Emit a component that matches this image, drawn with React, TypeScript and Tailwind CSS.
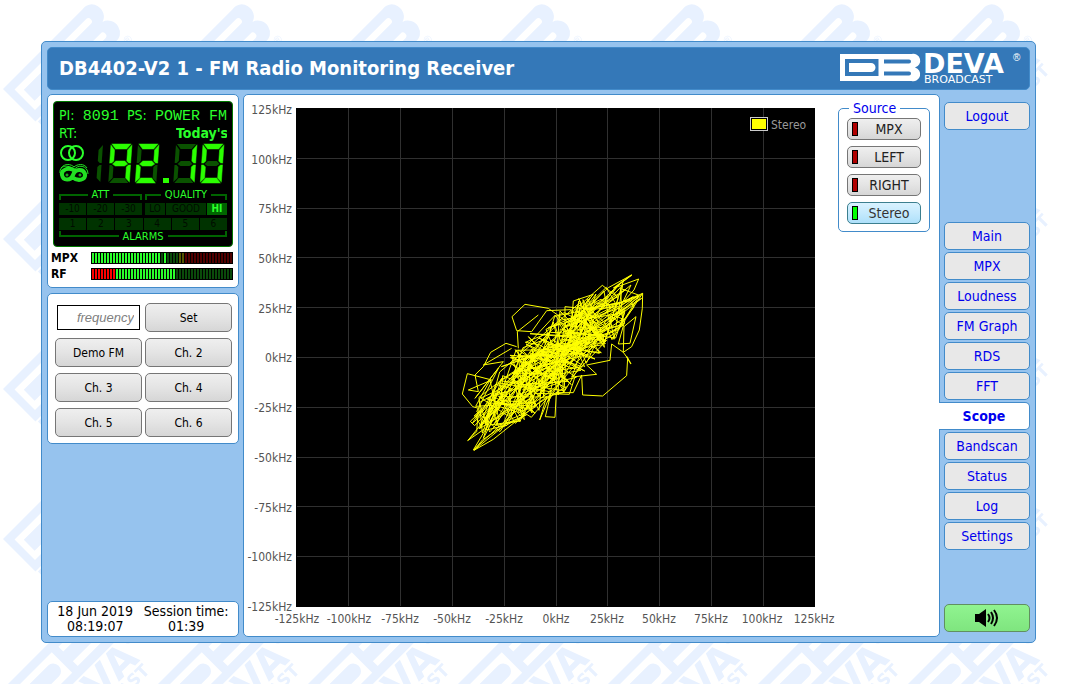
import type { ReactNode } from "react";

const NAV = ["Main", "MPX", "Loudness", "FM Graph", "RDS", "FFT", "Scope", "Bandscan", "Status", "Log", "Settings"];
const PRESETS = ["Demo FM", "Ch. 2", "Ch. 3", "Ch. 4", "Ch. 5", "Ch. 6"];
const SOURCES = ["MPX", "LEFT", "RIGHT", "Stereo"];
const TICKS = [-125, -100, -75, -50, -25, 0, 25, 50, 75, 100, 125];

function LogoMark() {
    return (
        <path
            fillRule="evenodd"
            d="M0 0H71.500A6.500 6.500 0 0 1 75 13.500A6.500 6.500 0 0 1 71.500 27H0ZM5 5V22H38.500V5ZM44 5.500V9.500H69A2 2 0 0 0 69 5.500ZM44 17.500V21.500H69A2 2 0 0 0 69 17.500ZM9 9H31A4.500 4.500 0 0 1 31 18H9Z"
        />
    );
}

// tiled page background
function Watermark() {
    return (
        <svg className="absolute inset-0 -z-10 h-full w-full" aria-hidden="true">
            <defs>
                <pattern id="deva" width="150" height="150" patternUnits="userSpaceOnUse">
                    <g transform="translate(3 89) rotate(-45)" fill="#e8f1ff">
                        <g transform="scale(1.57 1.7)">
                            <LogoMark />
                        </g>
                        <text x="-2" y="77" fontSize="40" fontWeight="bold" fontFamily="DejaVu Sans">DEVA</text>
                        <text x="0" y="92" fontSize="17" fontWeight="bold" fontFamily="DejaVu Sans">BROADCAST</text>
                        <text x="119" y="57" fontSize="11" fontFamily="Liberation Sans">®</text>
                    </g>
                </pattern>
            </defs>
            <rect width="1050" height="100%" fill="url(#deva)" />
        </svg>
    );
}

function Logo() {
    return (
        <svg width="184" height="40" viewBox="0 0 184 40" fill="#fff" role="img" aria-label="DEVA Broadcast">
            <g transform="translate(0 6)">
                <LogoMark />
            </g>
            <text x="83" y="25" fontSize="27" fontWeight="bold" fontFamily="DejaVu Sans">DEVA</text>
            <text x="84" y="35" fontSize="11" fontFamily="DejaVu Sans">BROADCAST</text>
            <text x="173" y="13" fontSize="10" fontFamily="Liberation Sans">®</text>
        </svg>
    );
}

function Panel({ className = "", children }: { className?: string; children: ReactNode }) {
    return <div className={`rounded-[5px] border border-[#428bca] bg-white ${className}`}>{children}</div>;
}

// segments in order: top, top right, bottom right, bottom, bottom left, top left, middle
const SEGMENTS = [
    "2,0 21,0 17,5 6,5",
    "22,1 22,19 20,19 18,17 18,6",
    "22,21 22,38 18,34 18,23 20,21",
    "2,39 21,39 17,34 6,34",
    "1,21 3,21 5,23 5,34 1,38",
    "1,1 5,6 5,17 3,19 1,19",
    "4,20 7,17 16,17 19,20 16,22 7,22",
];

function Digit({ x, on }: { x: number; on: string }) {
    return (
        <g transform={`translate(${x} 1) skewX(-4)`} strokeWidth="1" strokeLinejoin="round">
            {SEGMENTS.map((points, i) => (
                <polygon
                    key={i}
                    points={points}
                    fill={on[i] === "1" ? "#2bff00" : "#0a5200"}
                    stroke={on[i] === "1" ? "#2bff00" : "none"}
                    strokeOpacity="0.5"
                />
            ))}
        </g>
    );
}

function Frequency() {
    return (
        <svg width="170" height="42" viewBox="0 0 170 42" role="img" aria-label="92.10 MHz">
            <g fill="none" stroke="#2bff2b" strokeWidth="2">
                <circle cx="9" cy="10" r="7" />
                <circle cx="17" cy="10" r="7" />
            </g>
            <g fill="none" stroke="#22e022">
                <path strokeWidth="4" d="M16 28C10 23 2 27 3 32C4 38 12 38 14 32C16 26 24 25 26 31C27 37 19 39 13 34" />
                <path strokeWidth="1" d="M1 30C0 21 12 22 15 27C18 21 29 22 29 31M2 25C6 20 12 21 15 24C18 21 25 20 28 25" />
                <circle cx="8" cy="32" r="1" />
                <circle cx="21" cy="32" r="1" />
            </g>
            <g transform="translate(22 1) skewX(-4)" fill="#0a5200">
                <polygon points="22,1 22,19 20,19 18,17 18,6" />
                <polygon points="22,21 22,38 18,34 18,23 20,21" />
            </g>
            <Digit x={51} on="1110011" />
            <Digit x={78} on="1101101" />
            <rect x="104" y="35" width="6" height="5" fill="#2bff00" />
            <Digit x={116} on="0110000" />
            <Digit x={143} on="1111110" />
        </svg>
    );
}

function Bracket({ label, up }: { label: string; up?: boolean }) {
    const edge = up ? "mb-[5px] border-b-2" : "mt-[5px] border-t-2";
    return (
        <div className="flex h-3 flex-1 justify-center gap-1 text-[11px] leading-3 text-[#2bff2b]">
            <span className={`h-[6px] flex-1 border-l-2 border-[#006400] ${edge}`} />
            {label}
            <span className={`h-[6px] flex-1 border-r-2 border-[#006400] ${edge}`} />
        </div>
    );
}

function Cell({ className = "flex-1", children }: { className?: string; children: ReactNode }) {
    return <span className={`h-3 bg-[#003300] text-center text-[10px] leading-3 text-[#000c00] ${className}`}>{children}</span>;
}

function Lcd() {
    return (
        <div className="h-[146px] overflow-hidden rounded border border-[#007800] bg-black px-[5px] pt-[5px] text-[14px] text-[#2bff2b]">
            <div className="flex h-[17px] items-baseline justify-between whitespace-pre leading-4">
                <span>PI:</span>
                <span className="font-['Liberation_Mono'] text-[15px]">8091</span>
                <span>PS:</span>
                <span className="font-['Liberation_Mono'] text-[15px]">POWER FM</span>
            </div>
            <div className="flex h-[17px] items-center justify-between overflow-hidden leading-4">
                <span>RT:</span>
                <b className="w-[51px] overflow-hidden whitespace-nowrap">Today's</b>
            </div>
            <div className="pt-[2px]">
                <Frequency />
            </div>
            <div className="mt-1 flex gap-[3px]">
                <div className="flex w-[83px]"><Bracket label="ATT" /></div>
                <Bracket label="QUALITY" />
            </div>
            <div className="mt-[2px] flex gap-[3px]">
                <div className="flex w-[83px] gap-[1px]">
                    <Cell>-10</Cell>
                    <Cell>-20</Cell>
                    <Cell>-30</Cell>
                </div>
                <div className="flex flex-1 gap-[1px]">
                    <Cell className="w-5">LO</Cell>
                    <Cell>GOOD</Cell>
                    <span className="h-3 w-5 bg-[#006400] text-center text-[10px] font-bold leading-3">HI</span>
                </div>
            </div>
            <div className="mt-[3px] flex gap-[1px]">
                {[1, 2, 3, 4, 5, 6].map((n) => <Cell key={n}>{n}</Cell>)}
            </div>
            <div className="mt-[1px] flex"><Bracket label="ALARMS" up /></div>
        </div>
    );
}

function Meter({ label, bars }: { label: string; bars: [string, number][] }) {
    return (
        <div className="flex h-4 items-center justify-between">
            <b className="text-[12px] leading-4">{label}</b>
            <div className="flex h-3 gap-[1px] bg-black p-[1px]" role="img" aria-label={`${label} level`}>
                {bars.flatMap(([color, count], i) =>
                    Array.from({ length: count }, (_, j) => <i key={`${i}-${j}`} className={`w-[2px] ${color}`} />)
                )}
            </div>
        </div>
    );
}

const BUTTON = "rounded-[5px] border border-[#767676] bg-linear-to-b from-[#efefef] from-0% via-[#e4e4e4] via-50% to-[#d6d6d6]";

// stereo trace: a dense diagonal cloud
function tracePoints() {
    let seed = 4402;
    const rnd = () => {
        seed = (seed * 1103515245 + 12345) % 2147483648;
        return seed / 2147483648;
    };
    const pts: string[] = [];
    let base = 0;
    for (let i = 0; i < 380; i++) {
        if (i % 6 === 0) base = rnd() * 1.6 - 0.8;
        const t = Math.max(-0.95, Math.min(0.95, base + (rnd() - 0.5) * 0.6));
        const spread = (1 - t * t * 0.6) * (rnd() * 2 - 1);
        const x = 312 + t * 240 + spread * 72;
        const y = 278 - t * 225 + spread * 72;
        pts.push(`${Math.round(x)},${Math.round(y)}`);
    }
    return pts.join(" ");
}

function Scope() {
    return (
        <svg width="592" height="536" viewBox="244 98 592 536" className="shrink-0" role="img" aria-label="Scope">
            <rect x="296" y="108" width="519" height="499" />
            <g stroke="#303030">
                {TICKS.slice(1, -1).map((_, i) => (
                    <g key={i}>
                        <line x1={Math.round(296 + (i + 1) * 51.9) + 0.5} x2={Math.round(296 + (i + 1) * 51.9) + 0.5} y1="108" y2="606" />
                        <line y1={Math.round(108 + (i + 1) * 49.8) + 0.5} y2={Math.round(108 + (i + 1) * 49.8) + 0.5} x1="297" x2="815" />
                    </g>
                ))}
            </g>
            <g fill="#545454" fontSize="12">
                {TICKS.map((t, i) => (
                    <g key={t}>
                        <text x="292" y={611 - Math.round(i * 49.7)} textAnchor="end">{t}kHz</text>
                        <text x={297 + Math.round(i * 51.7)} y="623" textAnchor="middle">{t}kHz</text>
                    </g>
                ))}
            </g>
            <g transform="translate(450 265) scale(.3333)" fill="none" stroke="#ffff00" strokeWidth="3">
                <polyline points={tracePoints()} />
                <path d="M365 180L295 130L225 118L186 155L200 197L245 200L290 137L362 134L380 185M205 250L202 200L265 150M200 245L168 235L122 262L100 305L75 330L85 380L55 375L125 345L52 326L37 387L68 425L85 430L80 500L53 527L120 480M72 556L97 525L165 480L72 556L130 523L290 395L269 465L303 385L286 455L315 457L319 383L370 383L395 330L398 390L458 393L530 332L533 280L520 262L485 237L480 286L410 300L440 328L375 335L358 388L255 385L230 425L255 445L215 400" />
                <path d="M345 180V125L395 130L430 88L370 108L365 170L475 68L545 30L495 68L566 42L552 75L520 110L578 85L577 130L568 195L545 245L520 262L522 185L558 155L540 235L505 237L525 165L578 85L500 150L543 60L420 160L550 95L410 200L575 100L380 250L530 125L400 210L490 75L350 205" />
                <path d="M55 525L180 370L70 555L240 400L90 490L210 310L100 520L155 340L85 455L300 200L130 480L250 350L150 500L80 440L145 310L75 400L160 290L100 300L185 250" />
                <path strokeWidth="4" d="M545 30L490 70M543 297L530 275" />
            </g>
            <rect x="750.500" y="117.500" width="17" height="13" fill="#ffff00" stroke="#ccc" />
            <rect x="751.500" y="118.500" width="15" height="11" fill="none" stroke="#000" />
            <text x="771" y="129" fontSize="12" fill="#999">Stereo</text>
        </svg>
    );
}

function Source() {
    return (
        <fieldset className="mt-[2px] h-[132px] w-[92px] shrink-0 rounded-[5px] border border-[#428bca] px-2 text-[14px]">
            <legend className="ml-[2px] px-1 leading-4 text-[#0000ee]">Source</legend>
            <div className="flex flex-col gap-[6px] pt-[2px]">
                {SOURCES.map((s) => {
                    const active = s === "Stereo";
                    return (
                        <button
                            key={s}
                            aria-pressed={active}
                            className={
                                active
                                    ? "flex h-[22px] items-center rounded-[5px] border border-[#3c7f8f] bg-linear-to-b from-[#d9f2ff] via-[#c5eafd] to-[#aee0fa] pl-1 text-[#333]"
                                    : `flex h-[22px] items-center pl-1 text-[#222] ${BUTTON}`
                            }
                        >
                            <i className={`h-[14px] w-[6px] border border-black ${active ? "bg-[#00ff00]" : "bg-[#b00000]"}`} />
                            <span className="flex-1 leading-4">{s}</span>
                        </button>
                    );
                })}
            </div>
        </fieldset>
    );
}

function NavLink({ label }: { label: string }) {
    if (label === "Scope") {
        return (
            <a href="#scope" aria-current="page" className="relative -ml-[5px] flex h-7 items-center justify-center rounded-r-[5px] border border-l-0 border-[#428bca] bg-white font-bold">
                Scope
            </a>
        );
    }
    return (
        <a href={`#${label.toLowerCase()}`} className="flex h-7 items-center justify-center rounded-[5px] border border-[#428bca] bg-[#e8e8e8]">
            {label}
        </a>
    );
}

export default function App() {
    return (
        <div className="relative isolate min-h-screen overflow-hidden bg-white p-[41px] font-['DejaVu_Sans_Condensed','Noto_Sans',sans-serif] text-black">
            <Watermark />
            <div className="rounded-[5px] border border-[#428bca] bg-[#96c3ee] p-[5px]">
                <header className="flex h-[43px] items-center justify-between rounded-[5px] border border-[#428bca] bg-[#3478b8] pb-[2px] pl-[11px] pr-[5px]">
                    <h1 className="text-[20px] font-bold leading-6 text-white">DB4402-V2 1 - FM Radio Monitoring Receiver</h1>
                    <Logo />
                </header>

                <div className="mt-1 flex gap-1">
                    <aside className="flex w-48 shrink-0 flex-col gap-[5px]">
                        <Panel className="h-[194px] px-[5px] pt-[6px]">
                            <Lcd />
                            <div className="-ml-[2px] mt-[3px]">
                                <Meter
                                    label="MPX"
                                    bars={[["bg-[#2bff2b]", 23], ["bg-[#0a4a0a]", 1], ["bg-[#2bff2b]", 1], ["bg-[#0a4a0a]", 4], ["bg-[#555500]", 2], ["bg-[#500000]", 16]]}
                                />
                                <Meter label="RF" bars={[["bg-[#ff0000]", 8], ["bg-[#2bff2b]", 20], ["bg-[#0a4a0a]", 19]]} />
                            </div>
                        </Panel>
                        <Panel className="grid grid-cols-2 gap-x-[3px] gap-y-[6px] pb-[6px] pl-[7px] pr-[6px] pt-[9px] text-[12px]">
                            <input
                                aria-label="frequency"
                                placeholder="frequency"
                                className="m-[2px] h-[25px] min-w-0 border border-black px-[5px] text-right font-['Liberation_Sans'] text-[13px] italic placeholder:text-[#808080]"
                            />
                            <button className={`h-[29px] ${BUTTON}`}>Set</button>
                            {PRESETS.map((p) => (
                                <button key={p} className={`h-[29px] ${BUTTON}`}>{p}</button>
                            ))}
                        </Panel>
                        <Panel className="mt-auto flex h-9 items-center justify-around px-1 text-center text-[14px] leading-[15px]">
                            <div>18 Jun 2019<br />08:19:07</div>
                            <div>Session time:<br />01:39</div>
                        </Panel>
                    </aside>

                    <main className="min-w-0 flex-1">
                        <Panel className="flex h-[543px] justify-between pr-[9px] pt-[3px]">
                            <Scope />
                            <Source />
                        </Panel>
                    </main>

                    <nav className="flex w-[86px] shrink-0 flex-col gap-[2px] pb-[5px] pt-2 text-[14px] text-[#0000ee]">
                        <NavLink label="Logout" />
                        <div className="mt-[90px] flex flex-col gap-[2px]">
                            {NAV.map((n) => <NavLink key={n} label={n} />)}
                        </div>
                        <button aria-label="Listen" className="mt-auto flex h-7 items-center justify-center rounded-[5px] border border-[#609060] bg-linear-to-b from-[#90f490] to-[#7fe57f]">
                            <svg width="26" height="20" viewBox="0 0 26 20" fill="none" stroke="#000" strokeWidth="2">
                                <path d="M1 6H5L12 1V19L5 14H1Z" fill="#000" stroke="none" />
                                <path d="M14 6Q17 10 14 14M17 4Q21 10 17 16M20 2Q26 10 20 18" />
                            </svg>
                        </button>
                    </nav>
                </div>
            </div>
        </div>
    );
}
